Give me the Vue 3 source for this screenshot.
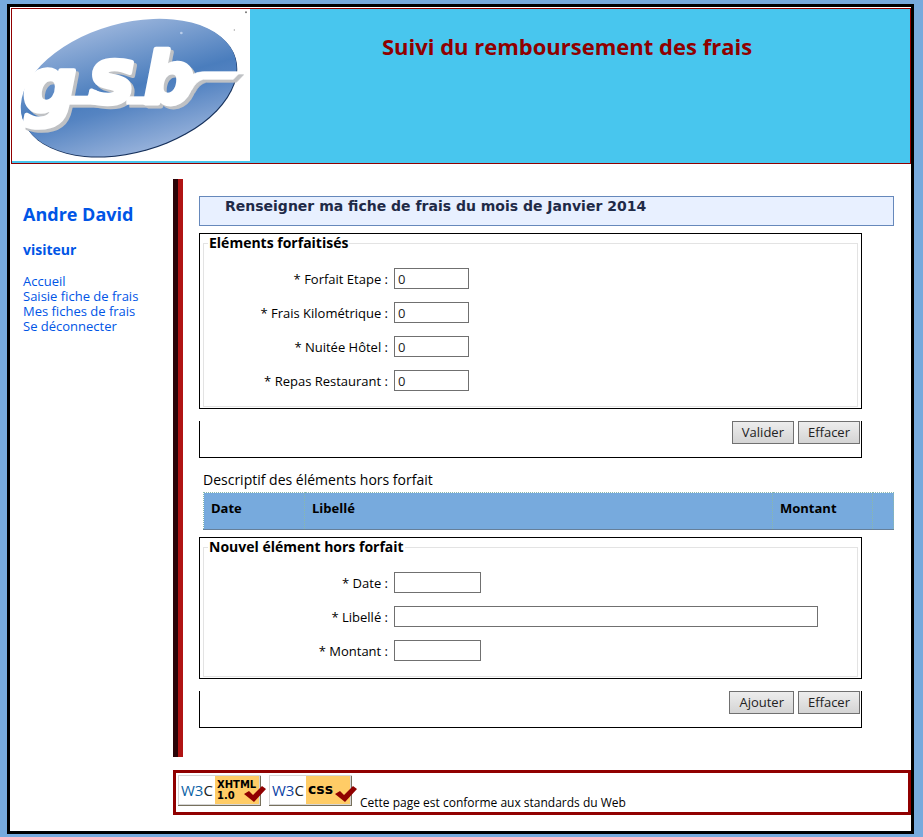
<script setup>
import { reactive } from 'vue'

const links = ['Accueil', 'Saisie fiche de frais', 'Mes fiches de frais', 'Se déconnecter']

const forfait = reactive([
  { id: 'etape', label: 'Forfait Etape', value: '0' },
  { id: 'km', label: 'Frais Kilométrique', value: '0' },
  { id: 'nuitee', label: 'Nuitée Hôtel', value: '0' },
  { id: 'repas', label: 'Repas Restaurant', value: '0' },
])

const horsForfait = reactive([
  { id: 'date', label: 'Date', value: '', size: 'medium' },
  { id: 'libelle', label: 'Libellé', value: '', size: 'wide' },
  { id: 'montant', label: 'Montant', value: '', size: 'medium' },
])
</script>

<template>
  <div class="page">
    <header class="banner">
      <svg class="logo" viewBox="36 27 714 456" role="img" aria-label="gsb">
        <defs>
          <linearGradient id="oval" gradientUnits="userSpaceOnUse" x1="0" y1="57" x2="0" y2="470">
            <stop offset="0" stop-color="#9bb5dc" />
            <stop offset="0.5" stop-color="#4a7dbd" />
            <stop offset="0.62" stop-color="#5584c2" />
            <stop offset="1" stop-color="#9ab4dc" />
          </linearGradient>
        </defs>
        <rect x="36" y="27" width="714" height="456" fill="#fff" />
        <ellipse cx="388" cy="266" rx="332" ry="193" transform="rotate(-15.8 388 266)" fill="#16315c" />
        <ellipse cx="386" cy="263" rx="332" ry="193" transform="rotate(-15.8 386 263)" fill="url(#oval)" />
        <g class="mark">
          <text x="70" y="332" font-size="222">g</text>
          <text x="266" y="309" font-size="230">s</text>
          <text x="430" y="309" font-size="214">b</text>
          <path d="M200 288H262L285 270L320 290V313H205ZM380 290H450V313H380ZM540 262Q570 215 610 215H722L700 238H610Q590 242 575 270Z" />
        </g>
        <circle cx="738" cy="37" r="3" fill="#777" />
        <circle cx="703" cy="90" r="2" fill="#999" />
        <circle cx="544" cy="99" r="4" fill="#b9cdea" />
      </svg>
      <h1>Suivi du remboursement des frais</h1>
    </header>

    <div class="body">
      <nav class="menu">
        <h2>Andre David</h2>
        <h3>visiteur</h3>
        <ul>
          <li v-for="link in links" :key="link"><a href="#">{{ link }}</a></li>
        </ul>
      </nav>

      <div class="column">
        <main class="content">
          <h2 class="title">Renseigner ma fiche de frais du mois de Janvier 2014</h2>

          <form @submit.prevent>
            <div class="box">
              <fieldset>
                <legend>Eléments forfaitisés</legend>
                <div v-for="f in forfait" :key="f.id" class="row">
                  <label :for="f.id">* {{ f.label }} :</label>
                  <input :id="f.id" v-model="f.value" type="text" class="small" />
                </div>
              </fieldset>
            </div>
            <div class="actions">
              <button type="submit">Valider</button>
              <button type="reset">Effacer</button>
            </div>
          </form>

          <table>
            <caption>Descriptif des éléments hors forfait</caption>
            <colgroup>
              <col class="c-date" />
              <col />
              <col class="c-amount" />
              <col class="c-action" />
            </colgroup>
            <thead>
              <tr>
                <th>Date</th>
                <th>Libellé</th>
                <th>Montant</th>
                <th></th>
              </tr>
            </thead>
          </table>

          <form @submit.prevent>
            <div class="box">
              <fieldset>
                <legend>Nouvel élément hors forfait</legend>
                <div v-for="f in horsForfait" :key="f.id" class="row">
                  <label :for="f.id">* {{ f.label }} :</label>
                  <input :id="f.id" v-model="f.value" type="text" :class="f.size" />
                </div>
              </fieldset>
            </div>
            <div class="actions">
              <button type="submit">Ajouter</button>
              <button type="reset">Effacer</button>
            </div>
          </form>
        </main>

        <footer>
          <a href="#" aria-label="W3C XHTML 1.0">
            <svg class="badge" width="88" height="31" viewBox="0 0 88 31">
              <rect width="83" height="31" fill="#d5d5d5" />
              <path d="M1 30H82V1H83V31H0V30Z" fill="#77705c" />
              <rect x="1" y="1" width="36" height="28" fill="#fff" />
              <rect x="37" y="1" width="44" height="28" fill="#ffcc66" />
              <text x="3" y="21" class="w3" fill="#0a62a5">W3<tspan fill="#222">C</tspan></text>
              <text x="39" y="13" class="std">XHTML</text>
              <text x="39" y="24" class="std">1.0</text>
              <path d="M66 19L71 16L75 20L84 11L88 14L76 27Z" fill="#900000" />
            </svg>
          </a>
          <a href="#" aria-label="W3C CSS">
            <svg class="badge" width="88" height="31" viewBox="0 0 88 31">
              <rect width="83" height="31" fill="#d5d5d5" />
              <path d="M1 30H82V1H83V31H0V30Z" fill="#77705c" />
              <rect x="1" y="1" width="36" height="28" fill="#fff" />
              <rect x="37" y="1" width="44" height="28" fill="#ffcc66" />
              <text x="3" y="21" class="w3" fill="#0a42a5">W3<tspan fill="#222">C</tspan></text>
              <text x="39" y="19" class="css">css</text>
              <path d="M66 19L71 16L75 20L84 11L88 14L76 27Z" fill="#900000" />
            </svg>
          </a>
          <p>Cette page est conforme aux standards du Web</p>
        </footer>
      </div>
    </div>
  </div>
</template>

<style>
body {
  background: #77aadd;
}
</style>

<style scoped>
* {
  box-sizing: border-box;
  margin: 0;
  padding: 0;
}

.page {
  margin: 4px 9px 3px 7px;
  padding: 1px 0 16px;
  border: 3px solid #000;
  background: #fff;
  color: #000;
  font: 13px/15px "Trebuchet MS", "Open Sans", sans-serif;
}

.banner {
  display: flex;
  margin-left: 1px;
  border: 1px solid #900000;
  background: #48c6ee;
}

.logo {
  flex: none;
  width: 238px;
  height: 152px;
  margin-bottom: 2px;
}

.mark {
  fill: #fff;
  stroke: #fff;
  stroke-width: 14px;
  stroke-linejoin: round;
  font-family: "DejaVu Sans", sans-serif;
  font-style: italic;
  font-weight: bold;
  filter: drop-shadow(9px 9px 0 #bfc1c4);
}

.mark path {
  stroke-width: 2px;
}

.banner h1 {
  flex: 1;
  padding: 21px 26px 0 0;
  color: #900000;
  font-size: 22px;
  line-height: 32px;
  font-weight: 700;
  text-align: center;
}

.body {
  display: grid;
  grid-template-columns: 163px 1fr;
  padding-top: 15px;
}

.menu {
  padding: 22px 0 0 13px;
  color: #0055e6;
}

.menu h2 {
  font-size: 18px;
  line-height: 26px;
  font-weight: 700;
}

.menu h3 {
  margin: 13px 0 14px;
  font-size: 14px;
  line-height: 20px;
  font-weight: 700;
}

.menu ul {
  list-style: none;
}

.menu a {
  color: inherit;
  text-decoration: none;
}

.content {
  padding: 17px 17px 29px 21px;
  border-left: 5px solid #2a0408;
  box-shadow: inset 5px 0 #b01414;
}

.title {
  height: 30px;
  padding-left: 25px;
  border: 1px solid #6688bb;
  background: #e8f0ff;
  color: #1f2a47;
  font: bold 14px/19px Verdana, "DejaVu Sans", sans-serif;
}

.box,
.actions {
  width: 663px;
  max-width: 100%;
  border: 1px solid #000;
}

.box {
  margin-top: 7px;
  padding: 0 3px 1px;
}

fieldset {
  padding: 16px 4px 15px;
  border: 1px solid #e3e3e3;
}

legend {
  padding: 0 1px;
  font-size: 14px;
  line-height: 18px;
  font-weight: 700;
}

.row {
  display: grid;
  grid-template-columns: 180px 1fr;
  column-gap: 6px;
  align-items: center;
}

.row + .row {
  margin-top: 13px;
}

.row label {
  padding-top: 2px;
  text-align: right;
}

.row input {
  height: 21px;
  padding: 0 3px;
  border: 1px solid #707070;
  background: #fff;
  color: #222;
  font: inherit;
}

.small {
  width: 75px;
}

.medium {
  width: 87px;
}

.wide {
  width: 424px;
}

.actions {
  display: flex;
  justify-content: flex-end;
  align-items: flex-start;
  gap: 4px;
  height: 37px;
  margin-top: 12px;
  padding-right: 1px;
  border-top: 0;
}

button {
  height: 23px;
  padding: 0 9px;
  border: 1px solid #707070;
  background: linear-gradient(#ededed, #d4d4d4);
  color: #222;
  font: inherit;
}

table {
  width: calc(100% - 4px);
  margin: 12px 0 0 4px;
  border-collapse: collapse;
  table-layout: fixed;
}

caption {
  padding-bottom: 3px;
  font-size: 14px;
  line-height: 19px;
  text-align: left;
}

.c-date {
  width: 101px;
}

.c-amount {
  width: 100px;
}

.c-action {
  width: 21px;
}

th {
  height: 37px;
  padding: 8px 7px;
  border: 1px dotted #8ab8ac;
  border-bottom: 1px solid #667f99;
  background: #77aadd;
  font-size: 13px;
  line-height: 15px;
  font-weight: 700;
  text-align: left;
  vertical-align: top;
}

footer {
  display: flex;
  gap: 3px;
  margin-top: 13px;
  height: 45px;
  padding: 2px;
  border: 3px solid #900000;
}

.badge {
  display: block;
}

.w3 {
  font: 15px "Open Sans", sans-serif;
}

.std {
  font: bold 10px "DejaVu Sans", sans-serif;
}

.css {
  font: bold 14px "DejaVu Sans", sans-serif;
}

footer p {
  margin-top: 20px;
  font-size: 12px;
}
</style>
